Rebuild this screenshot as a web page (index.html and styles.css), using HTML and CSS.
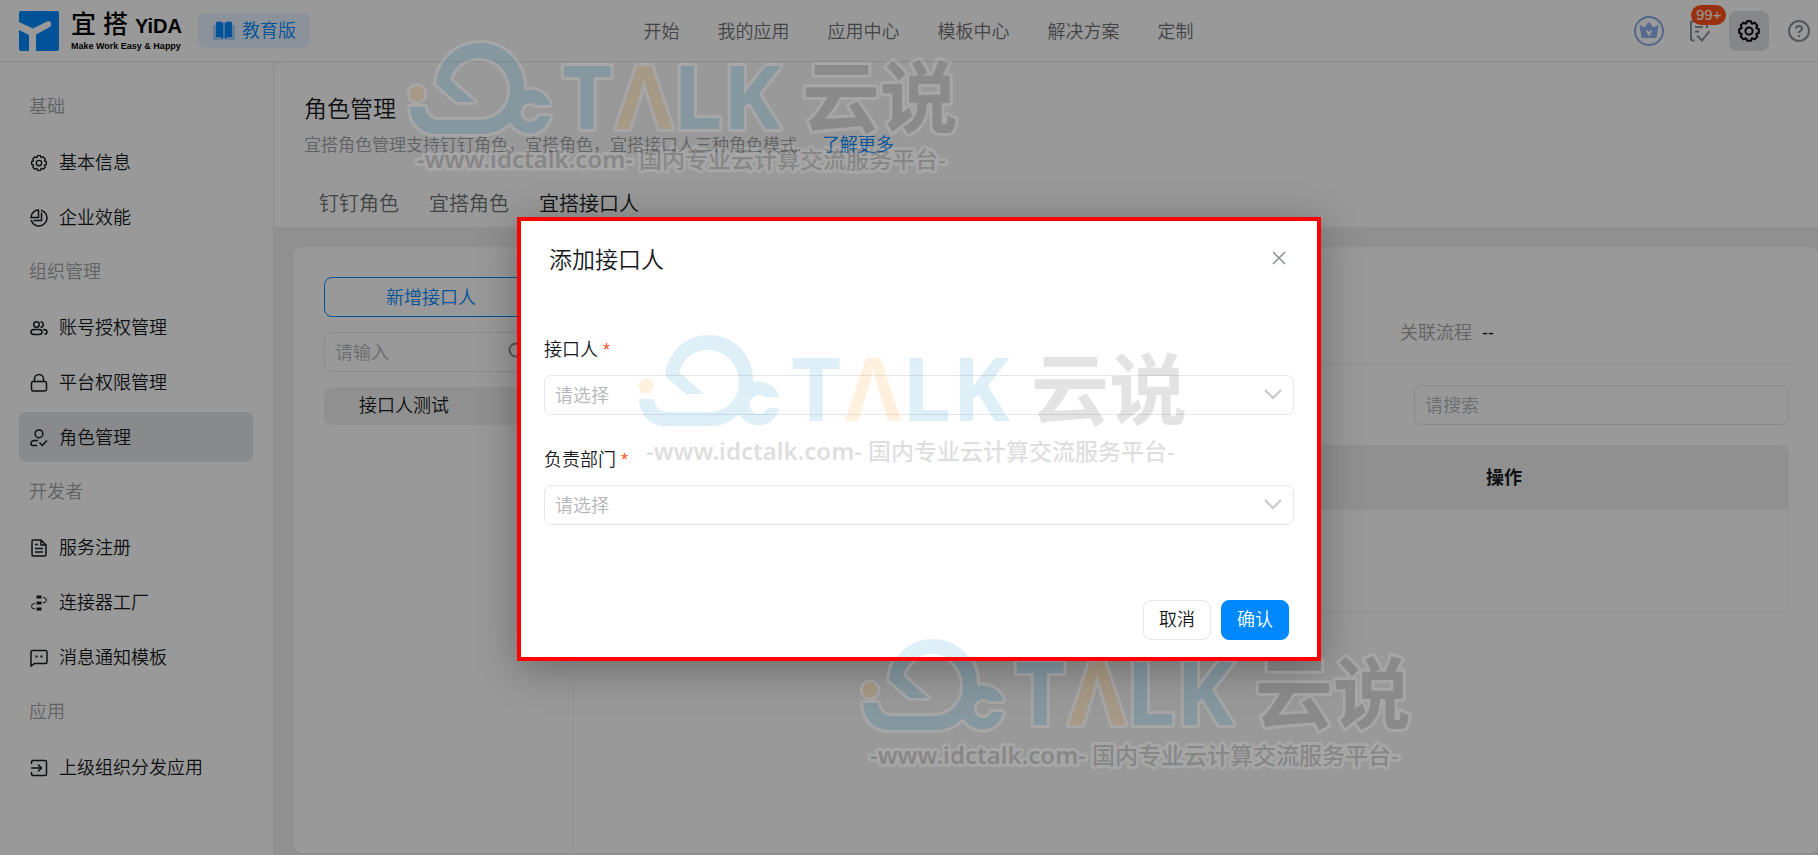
FILE: index.html
```
<!DOCTYPE html>
<html lang="zh">
<head>
    <meta charset="UTF-8">
    <title>角色管理 - 宜搭</title>
    <link rel="stylesheet" href="styles.css">
</head>
<body>
    <svg class="sprite" aria-hidden="true">
        <symbol id="icon-gear" viewBox="0 0 24 24">
            <path d="M9.3 4.5 10.1 2.2H13.9L14.7 4.5 15.4 4.7 17.6 3.7 20.3 6.4 19.3 8.6 19.5 9.3 21.8 10.1V13.9L19.5 14.7 19.3 15.4 20.3 17.6 17.6 20.3 15.4 19.3 14.7 19.5 13.9 21.8H10.1L9.3 19.5 8.6 19.3 6.4 20.3 3.7 17.6 4.7 15.4 4.5 14.7 2.2 13.9V10.1L4.5 9.3 4.7 8.6 3.7 6.4 6.4 3.7 8.6 4.7Z"/>
            <circle cx="12" cy="12" r="3.6"/>
        </symbol>
        <symbol id="icon-down" viewBox="0 0 18 18">
            <path d="M1 5l8 8 8-8"/>
        </symbol>
    </svg>

    <header class="topbar">
        <div class="brand">
            <svg class="logo" viewBox="0 0 40 40">
                <rect width="40" height="40" rx="2" fill="#0089ff"/>
                <path d="M0 11 14 17.500 28 10.500Q31 9 32 12 33 15 30 16.500L17 23.500V40H10V24L0 19Z" fill="#fff"/>
            </svg>
            <div class="brand-text">
                <div class="brand-name">宜 搭 <b>YiDA</b></div>
                <div class="brand-slogan">Make Work Easy &amp; Happy</div>
            </div>
            <span class="edition">
                <svg width="22" height="20" viewBox="0 0 22 20">
                    <path d="M0 4h3v13h7v2H0zM22 4h-3v13h-7v2h10z" fill="#a6d3fb"/>
                    <path d="M3 1q5-1.500 7.500 1v16Q8 15.500 3 16.500zM19 1q-5-1.500-7.500 1v16q2.500-2.500 7.500-1.500z" fill="#0089ff"/>
                </svg>
                教育版
            </span>
        </div>
        <nav class="topnav">
            <a href="#">开始</a>
            <a href="#">我的应用</a>
            <a href="#">应用中心</a>
            <a href="#">模板中心</a>
            <a href="#">解决方案</a>
            <a href="#">定制</a>
        </nav>
        <div class="actions">
            <button class="action" aria-label="会员">
                <svg width="30" height="30" viewBox="0 0 30 30">
                    <circle cx="15" cy="15" r="14" fill="none" stroke="#8aace8" stroke-width="2"/>
                    <path d="M6 9.500 10.500 12 15 6.500 19.500 12 24 9.500 22 21.500H8Z" fill="#8fb2ee" stroke="#8fb2ee" stroke-width="1"/>
                    <path d="M12.800 14.500 15 18.500 17.200 14.500" fill="none" stroke="#fff" stroke-width="2"/>
                </svg>
            </button>
            <button class="action todo" aria-label="待办">
                <svg width="20" height="22" viewBox="0 0 20 22">
                    <path d="M4.500 20.500H3Q1 20.500 1 18.500V1.500H17V8M5 7h8M5 11.500h4M7 15.500l5 5 7.500-9.500"/>
                </svg>
                <span class="badge">99+</span>
            </button>
            <button class="action settings" aria-label="设置">
                <svg width="24" height="24"><use href="#icon-gear"/></svg>
            </button>
            <button class="action help" aria-label="帮助">
                <svg width="22" height="22" viewBox="0 0 22 22">
                    <circle cx="11" cy="11" r="10"/>
                    <path d="M8 8.800Q8 6 11 6T14 8.600Q14 10.200 12.300 11 11 11.700 11 13M11 15v2"/>
                </svg>
            </button>
        </div>
    </header>

    <div class="layout">
        <aside class="sidebar">
            <h2 class="group">基础</h2>
            <a class="item" href="#">
                <svg viewBox="0 0 24 24"><use href="#icon-gear"/></svg>
                基本信息
            </a>
            <a class="item" href="#">
                <svg viewBox="0 0 18 18"><path d="M11 1.200A8 8 0 1 1 1.200 11M8.500 1V8.500H1A7.500 7.500 0 0 1 8.500 1ZM11.500 3.500V11.500H3.500"/></svg>
                企业效能
            </a>
            <h2 class="group">组织管理</h2>
            <a class="item" href="#">
                <svg viewBox="0 0 18 18"><circle cx="6.500" cy="5.500" r="2.800"/><path d="M10.500 2.700a2.800 2.800 0 1 1 0 5.600M1 13Q1 10.500 4 10.500H9Q12 10.500 12 13T9 15.500H4Q1 15.500 1 13ZM13 10.500q4 0 4 2.500 0 2-2.500 2.300"/></svg>
                账号授权管理
            </a>
            <a class="item" href="#">
                <svg viewBox="0 0 18 18"><rect x="1.500" y="7.500" width="15" height="9.500" rx="2"/><path d="M4.500 7.500V5a4.500 4.500 0 0 1 9 0V7.500"/></svg>
                平台权限管理
            </a>
            <a class="item active" href="#">
                <svg viewBox="0 0 18 18"><circle cx="9" cy="4.800" r="3.900"/><path d="M7 16.500H2.500Q1 16.500 1 14.500 1 11.500 5 11.500H8M9.500 13.500l2.800 3L17 11.500"/></svg>
                角色管理
            </a>
            <h2 class="group">开发者</h2>
            <a class="item" href="#">
                <svg viewBox="0 0 18 18"><path d="M3.500 1H11L16 6V15.500Q16 17 14.500 17H3.500Q2 17 2 15.500V2.500Q2 1 3.500 1ZM11 1V6H16M5 5.500H8M5 9.500H13M5 13H13"/></svg>
                服务注册
            </a>
            <a class="item" href="#">
                <svg viewBox="0 0 18 18"><path d="M6.500 1.500h5v3h-5zM6.500 7.500h5v3h-5zM6.500 13.500h5v3h-5z" fill="currentColor" stroke="none"/><path d="M13 3.500q3.500 0 3.500 2.700T13 8.800M5 9.500q-3.500 0-3.500 2.800T5 15" stroke-width="1"/></svg>
                连接器工厂
            </a>
            <a class="item" href="#">
                <svg viewBox="0 0 18 18"><path d="M2.500 1.500H15.500Q17 1.500 17 3V13Q17 14.500 15.500 14.500H4.500L1 17V3Q1 1.500 2.500 1.500Z"/><path d="M5.500 7.500h2M10.500 7.500h2" stroke-width="2"/></svg>
                消息通知模板
            </a>
            <h2 class="group">应用</h2>
            <a class="item" href="#">
                <svg viewBox="0 0 18 18"><path d="M1.500 5V3Q1.500 1.500 3 1.500H15Q16.500 1.500 16.500 3V15Q16.500 16.500 15 16.500H3Q1.500 16.500 1.500 15V13M1 9H11M8 5.500 11.500 9 8 12.500"/></svg>
                上级组织分发应用
            </a>
        </aside>

        <main class="main">
            <section class="page-head">
                <h1>角色管理</h1>
                <p>宜搭角色管理支持钉钉角色，宜搭角色，宜搭接口人三种角色模式.<a href="#">了解更多</a></p>
                <nav class="tabs">
                    <a href="#">钉钉角色</a>
                    <a href="#">宜搭角色</a>
                    <a href="#" class="current">宜搭接口人</a>
                </nav>
            </section>

            <section class="panel">
                <div class="list">
                    <button class="btn-add">新增接口人</button>
                    <div class="search">
                        <input type="text" placeholder="请输入" aria-label="搜索接口人">
                        <svg width="18" height="18" viewBox="0 0 18 18"><circle cx="8" cy="8" r="6.500"/><path d="M13 13l4 4"/></svg>
                    </div>
                    <div class="list-item">接口人测试</div>
                </div>
                <div class="detail">
                    <div class="info">
                        <span class="info-label">关联流程</span>
                        <span>--</span>
                    </div>
                    <div class="toolbar">
                        <input type="text" placeholder="请搜索" aria-label="搜索">
                    </div>
                    <table class="members">
                        <thead>
                            <tr><th></th><th>操作</th></tr>
                        </thead>
                        <tbody>
                            <tr><td></td><td></td></tr>
                        </tbody>
                    </table>
                </div>
            </section>
        </main>
    </div>

    <div class="mask"></div>
    <div class="dialog-wrap">
        <div class="dialog" role="dialog" aria-labelledby="dialogTitle">
            <div class="dialog-head">
                <h2 id="dialogTitle">添加接口人</h2>
                <button class="close" aria-label="关闭">
                    <svg width="14" height="14" viewBox="0 0 14 14"><path d="M1 1l12 12M13 1 1 13"/></svg>
                </button>
            </div>
            <form class="dialog-body">
                <div class="field">
                    <label for="contact">接口人 <i>*</i></label>
                    <div class="select">
                        <select id="contact"><option>请选择</option></select>
                        <svg width="18" height="18"><use href="#icon-down"/></svg>
                    </div>
                </div>
                <div class="field">
                    <label for="dept">负责部门 <i>*</i></label>
                    <div class="select">
                        <select id="dept"><option>请选择</option></select>
                        <svg width="18" height="18"><use href="#icon-down"/></svg>
                    </div>
                </div>
            </form>
            <div class="dialog-foot">
                <button class="btn">取消</button>
                <button class="btn primary">确认</button>
            </div>
        </div>
    </div>

    <div class="watermark wm-top"></div>
    <div class="watermark wm-middle"></div>
    <div class="watermark wm-bottom"></div>

    <template id="watermark">
        <svg width="560" height="136" viewBox="-6 -6 560 136">
            <path class="wm-blue" d="M27 40A44 44 0 0 1 115 46C127 44 139 50 141 61H127A9.500 9.500 0 1 0 130 72H141C137 93 112 95 101 78 94 85 85 90 74 90H27C13 90 2 80 1 63H16C17 71 22 76 29 76H72C88 75 101 64 101 46 101 28 87 14 70 14 56 14 45 22 41 36L66 58H48Z"/>
            <circle class="wm-orange" cx="8" cy="50" r="7.500"/>
            <text class="wm-latin wm-blue" x="153" y="85">T</text>
            <text class="wm-latin wm-orange" x="207" y="85">Λ</text>
            <text class="wm-latin wm-blue" x="264" y="85">L</text>
            <text class="wm-latin wm-blue" x="314" y="85">K</text>
            <text class="wm-cjk" x="393" y="83">云说</text>
            <text class="wm-url" x="8" y="124">-www.idctalk.com-</text>
            <text class="wm-tag" x="230" y="124">国内专业云计算交流服务平台-</text>
        </svg>
    </template>

    <script>
        const tpl = document.getElementById('watermark');
        document.querySelectorAll('.watermark').forEach(el => {
            el.appendChild(tpl.content.cloneNode(true));
        });
    </script>
</body>
</html>
```

FILE: styles.css
```
:root {
    --primary: #0089ff;
    --text: #171a1d;
    --text-2: #6f7275;
    --text-3: #a2a3a5;
    --border: #e5e6e8;
    --border-light: #f0f0f1;
    --page-bg: #f1f1f1;
}

* {
    box-sizing: border-box;
    margin: 0;
    padding: 0;
}

body {
    display: flex;
    flex-direction: column;
    position: relative;
    height: 100vh;
    overflow: hidden;
    font: 350 18px/28px "Liberation Sans", "Noto Sans CJK SC", sans-serif;
    color: var(--text);
    background: var(--page-bg);
}

a {
    color: inherit;
    text-decoration: none;
}

button,
input,
select {
    font: inherit;
    color: inherit;
}

button {
    border: none;
    background: none;
    cursor: pointer;
}

svg {
    display: block;
    flex: none;
}

.sprite {
    position: absolute;
    width: 0;
    height: 0;
}

/* top bar */
.topbar {
    display: grid;
    grid-template-columns: 1fr auto 1fr;
    align-items: center;
    height: 62px;
    padding-left: 19px;
    background: #fff;
    border-bottom: 1px solid var(--border);
}

.brand {
    display: flex;
    align-items: center;
}

.logo {
    width: 40px;
    height: 40px;
}

.brand-text {
    margin: 0 16px 0 12px;
    color: #000;
}

.brand-name {
    font-size: 25px;
    font-weight: 500;
    line-height: 28px;
    white-space: nowrap;
}

.brand-name b {
    font-size: 20px;
}

.brand-slogan {
    font-size: 9px;
    font-weight: 700;
    line-height: 12px;
    white-space: nowrap;
}

.edition {
    display: flex;
    align-items: center;
    gap: 7px;
    height: 35px;
    padding: 0 14px 0 15px;
    border-radius: 8px;
    background: #e8f4ff;
    color: var(--primary);
}

.topnav {
    display: flex;
    gap: 38px;
    padding-top: 2px;
    color: var(--text-2);
}

.actions {
    display: flex;
    align-items: center;
    justify-content: flex-end;
    margin-right: 8px;
}

.action {
    display: flex;
    align-items: center;
    justify-content: center;
    position: relative;
    fill: none;
    stroke: #8c9197;
    stroke-width: 2;
}

.todo {
    margin: 0 19px 0 26px;
}

.badge {
    position: absolute;
    left: 1px;
    top: -15px;
    padding: 0 5px;
    border-radius: 10px;
    background: #ff5219;
    color: #fff;
    font-size: 15px;
    line-height: 20px;
}

.settings {
    width: 40px;
    height: 40px;
    margin-right: 19px;
    border-radius: 8px;
    background: #dfe2e5;
    stroke: #000;
}

/* sidebar */
.layout {
    display: flex;
    flex: 1;
    min-height: 0;
}

.sidebar {
    display: flex;
    flex-direction: column;
    gap: 5px;
    flex: none;
    width: 274px;
    padding: 20px 20px 0 19px;
    background: #fff;
    border-right: 1px solid #ececed;
}

.group {
    padding-left: 10px;
    font-size: 18px;
    font-weight: 350;
    line-height: 50px;
    color: var(--text-3);
}

.item {
    display: flex;
    align-items: center;
    gap: 11px;
    height: 50px;
    padding: 2px 0 0 11px;
    border-radius: 8px;
}

.item svg {
    width: 18px;
    height: 18px;
    fill: none;
    stroke: currentColor;
    stroke-width: 1.5;
    overflow: visible;
}

.item use {
    stroke-width: 1.8;
}

.item.active {
    background: #e3e6e9;
}

/* page */
.main {
    display: flex;
    flex-direction: column;
    flex: 1;
    min-width: 0;
}

.page-head {
    height: 165px;
    padding: 32px 30px 0;
    background: #fff;
    border-top-left-radius: 8px;
}

.page-head h1 {
    font-size: 23px;
    font-weight: 350;
    line-height: 30px;
}

.page-head p {
    margin-top: 6px;
    font-size: 17px;
    line-height: 30px;
    color: var(--text-3);
}

.page-head p a {
    margin-left: 20px;
    font-size: 18px;
    color: var(--primary);
}

.tabs {
    display: flex;
    margin-top: 21px;
}

.tabs a {
    padding: 0 15px;
    font-size: 20px;
    line-height: 44px;
    color: var(--text-2);
    border-bottom: 2px solid transparent;
}

.tabs .current {
    color: var(--text);
    border-color: var(--primary);
}

.panel {
    display: flex;
    flex: 1;
    margin: 20px 0 2px 20px;
    border-radius: 8px;
    background: #fff;
}

.list {
    display: flex;
    flex-direction: column;
    width: 280px;
    padding: 30px 35px 0 30px;
    border-right: 1px solid var(--border-light);
}

.btn-add {
    height: 40px;
    padding-top: 2px;
    border: 1px solid var(--primary);
    border-radius: 8px;
    color: var(--primary);
}

input {
    width: 100%;
    height: 40px;
    padding: 2px 10px 0;
    border: 1px solid var(--border);
    border-radius: 8px;
    background: #fff;
}

input::placeholder {
    color: #b5b6b8;
}

.search {
    position: relative;
    margin: 15px 0;
}

.search svg {
    position: absolute;
    right: 12px;
    top: 10px;
    fill: none;
    stroke: #8c9197;
    stroke-width: 2;
}

.list-item {
    padding-left: 35px;
    border-radius: 8px;
    background: var(--page-bg);
    line-height: 38px;
}

.detail {
    flex: 1;
    padding: 72px 29px 0 30px;
}

.info {
    display: flex;
    gap: 10px;
    margin-right: -5px;
    padding: 0 300px 17px 0;
    justify-content: flex-end;
    border-bottom: 1px solid var(--border-light);
}

.info-label {
    color: var(--text-3);
}

.toolbar {
    width: 375px;
    margin: 20px 0 20px auto;
}

.members {
    width: 100%;
    border: 1px solid var(--border-light);
    border-spacing: 0;
    border-radius: 8px 8px 0 0;
    table-layout: fixed;
}

.members th {
    height: 64px;
    background: var(--page-bg);
    font-weight: 700;
}

.members th:first-child {
    width: 52%;
}

.members td {
    height: 102px;
}

/* dialog */
.mask {
    position: absolute;
    inset: 0;
    background: rgba(0, 0, 0, 0.4);
}

.dialog-wrap {
    position: absolute;
    inset: 0;
    display: flex;
    align-items: center;
    justify-content: center;
    padding: 22px 0 0 20px;
}

.dialog {
    position: relative;
    width: 804px;
    padding: 28px 27px 21px;
    background: #fff;
    box-shadow: 0 8px 40px rgba(0, 0, 0, 0.3);
}

.dialog::after {
    content: "";
    position: absolute;
    inset: 0;
    z-index: 3;
    border: 4px solid #f00;
    pointer-events: none;
}

.dialog-head {
    display: flex;
    align-items: center;
    justify-content: space-between;
    padding: 0 8px 0 5px;
}

.dialog-head h2 {
    font-size: 23px;
    font-weight: 350;
    line-height: 30px;
}

.close {
    padding-bottom: 4px;
    fill: none;
    stroke: #8c9197;
    stroke-width: 1.5;
}

.dialog-body {
    padding: 61px 0 75px;
}

.field + .field {
    margin-top: 31px;
}

.field label {
    display: block;
    margin-bottom: 11px;
}

.field i {
    font-style: normal;
    color: #ff5219;
}

.select {
    position: relative;
}

.select select {
    display: block;
    width: 100%;
    height: 40px;
    padding: 2px 10px 0;
    border: 1px solid var(--border);
    border-radius: 7px;
    appearance: none;
    background: #fff;
    color: #b5b6b8;
}

.select svg {
    position: absolute;
    right: 12px;
    top: 10px;
    fill: none;
    stroke: #c6c8ca;
    stroke-width: 2;
    pointer-events: none;
}

.dialog-foot {
    display: flex;
    justify-content: flex-end;
    gap: 10px;
    padding-right: 5px;
}

.btn {
    width: 68px;
    height: 40px;
    border: 1px solid var(--border);
    border-radius: 8px;
    background: #fff;
}

.btn.primary {
    border-color: var(--primary);
    background: var(--primary);
    color: #fff;
}

/* watermark */
.watermark {
    position: absolute;
    z-index: 2;
    opacity: 0.13;
    pointer-events: none;
    fill: #2f2f2f;
    stroke: #fff;
    stroke-width: 6;
    stroke-linejoin: round;
    paint-order: stroke;
}

.watermark svg {
    overflow: visible;
}

.wm-top {
    left: 403px;
    top: 38px;
}

.wm-middle {
    left: 632px;
    top: 330px;
}

.wm-bottom {
    left: 856px;
    top: 634px;
}

.wm-blue {
    fill: #098cc8;
}

.wm-orange {
    fill: #ff9b0a;
}

.wm-latin {
    font: 700 87px "Open Sans", sans-serif;
}

.wm-cjk {
    font: 700 78px "Noto Sans CJK SC", sans-serif;
}

.wm-url {
    fill: #0a0a0a;
    font: 600 24px "Noto Sans", sans-serif;
}

.wm-tag {
    fill: #0a0a0a;
    font: 500 23px "Noto Sans CJK SC", sans-serif;
}
```
